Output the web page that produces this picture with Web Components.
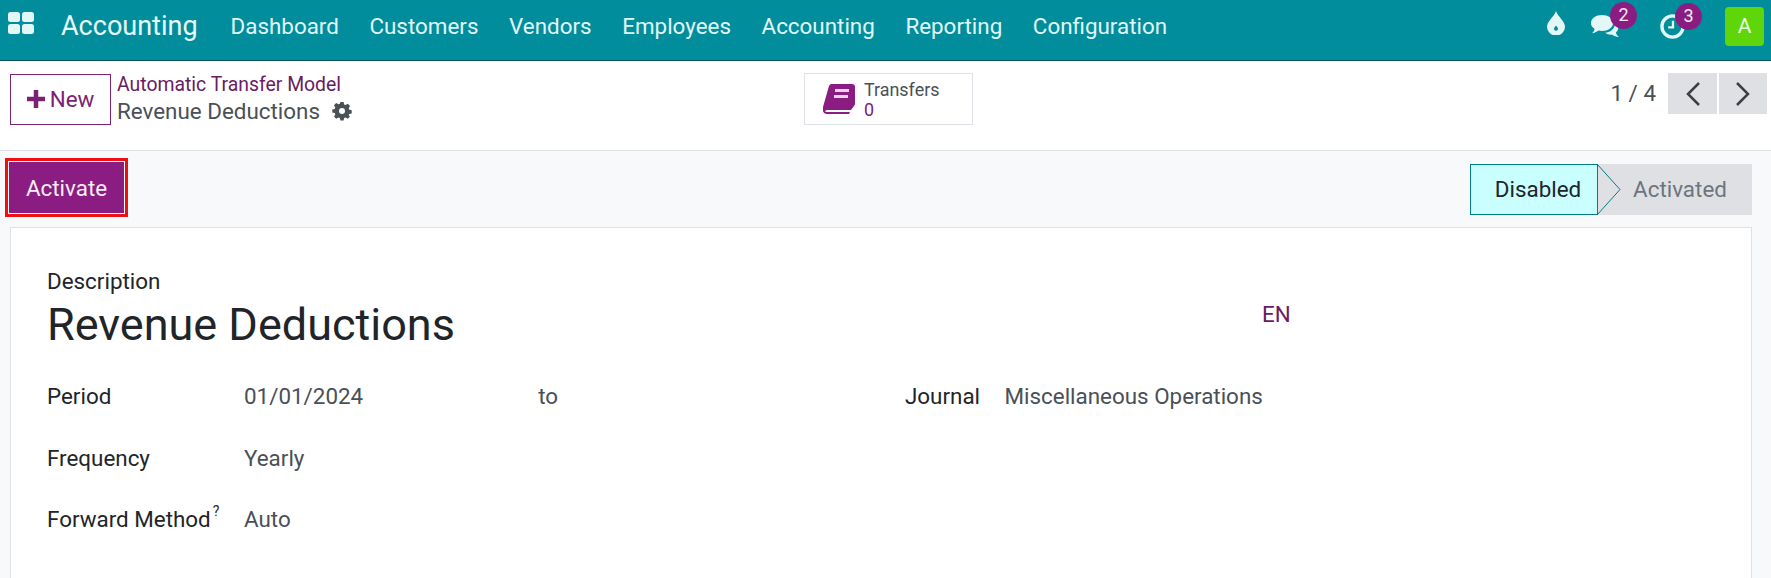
<!DOCTYPE html>
<html>
<head>
<meta charset="utf-8">
<title>Revenue Deductions</title>
<style>
html,body{margin:0;height:100%;overflow:hidden}
body{font-family:Roboto,"Liberation Sans",sans-serif;background:#f8f9fb;color:#212529}
</style>
</head>
<body>
<app-navbar></app-navbar>
<control-panel></control-panel>
<form-sheet></form-sheet>

<script>
//top bar with the apps menu, sections and systray
class AppNavbar extends HTMLElement{
    constructor() {
        super();
        this.attachShadow({mode:'open'});
        let items = ['Dashboard','Customers','Vendors','Employees','Accounting','Reporting','Configuration'];
        this.shadowRoot.innerHTML = `
<style>
:host{display:flex;align-items:center;height:52px;padding-bottom:8px;background:#018d9c;border-bottom:1px solid #00535c;color:#e0f8f8;font-size:22.400px;box-sizing:content-box}
.apps{width:26px;height:22px;margin:0 0 0 8px;position:relative;top:-3px;flex:none}
.brand{font-size:27px;margin-left:27px;color:#e6fbfb}
nav{display:flex;gap:30.600px;margin-left:33px}
.sys{margin-left:auto;display:flex;align-items:center;height:100%}
.ic{position:relative;display:flex}
b{position:absolute;width:27px;height:27px;border-radius:50%;background:#8b1d82;color:#eee;font:400 18px/26px Roboto,sans-serif;text-align:center}
.av{width:39px;height:39px;background:#5fd60a;border-radius:4px;color:#e9fbe0;font-size:21px;line-height:39px;text-align:center;margin:0 7px 0 0}
</style>
<svg class="apps" viewBox="0 0 26 22" fill="#e2f7f6"><rect x="0" y="0" width="12" height="10" rx="2.500"/><rect x="14" y="0" width="12" height="10" rx="2.500"/><rect x="0" y="12" width="12" height="10" rx="2.500"/><rect x="14" y="12" width="12" height="10" rx="2.500"/></svg>
<span class="brand">Accounting</span>
<nav>${items.map(i=>`<span>${i}</span>`).join('')}</nav>
<div class="sys">
  <span class="ic" style="margin-right:25px;top:-3px"><svg width="18" height="24" viewBox="0 0 18 24"><path d="M9 0C11 6 18 10 18 16A9 8.500 0 0 1 0 16C0 10 7 6 9 0Z" fill="#e2f7f6"/><path d="M9 14.500c1 1.500 2 2.300 2 3.300a2 2 0 0 1-4 0c0-1 1-1.800 2-3.300z" fill="#018d9c"/></svg></span>
  <span class="ic" style="margin-right:40px"><svg width="30" height="24" viewBox="0 0 30 24" fill="#e2f7f6"><path d="M12 1C18 1 23 4.500 23 9S18 17 12 17C10.500 17 9.500 16.800 8.500 16.500 6.500 18 4.500 19 2 19.300 3.500 18 4.400 16.500 4.500 14.800 2 13.400 1 11.300 1 9 1 4.500 6 1 12 1Z"/><path d="M25 9.500C27.500 11 29 13 28 15.500 27.500 16.800 26.800 17.700 26 18.300 26 20 27 21.500 29 23 26 22.800 24 22 22.500 20.700 20 21 17 20.300 15 18.800 20 18.500 25 15 25 9.500Z"/></svg><b style="left:20px;top:-12px">2</b></span>
  <span class="ic" style="margin-right:40px"><svg width="25" height="25" viewBox="0 0 26 26" fill="none" stroke="#e2f7f6"><circle cx="13" cy="13" r="11" stroke-width="3.500"/><path d="M13.500 7V14H8.500" stroke-width="2.400"/></svg><b style="left:15px;top:-11px">3</b></span>
  <span class="av">A</span>
</div>`;
    }
}
window.customElements.define('app-navbar', AppNavbar);

//white strip under the navbar: new button, breadcrumb, stat button, pager
class ControlPanel extends HTMLElement{
    constructor() {
        super();
        this.attachShadow({mode:'open'});
        this.shadowRoot.innerHTML = `
<style>
:host{display:grid;grid-template-columns:804px 169px 1fr;height:89px;background:#fff;border-bottom:1px solid #dee2e6;font-size:22.400px}
.left{display:flex;align-items:flex-start;padding:13px 0 0 10px}
.new{box-sizing:border-box;width:101px;height:51px;padding-bottom:2px;border:1px solid #7c2274;color:#7c2274;display:flex;align-items:center;justify-content:center;gap:5px}
.crumbs{margin-left:6px;line-height:27px;margin-top:-3px}
.crumbs a{display:block;color:#6a1b65;font-size:19.400px}
.crumbs span{display:flex;align-items:center;gap:12px;color:#495057;font-size:22.400px}
.crumbs svg{position:relative;top:-1px}
.stat{box-sizing:border-box;margin-top:12px;height:52px;border:1px solid #dee2e6;display:flex;align-items:center;padding-left:18px;gap:9px;color:#495057}
.stat div{font-size:17.920px;line-height:20px;margin-top:1px}
.stat i{display:block;font-style:normal;color:#7c2274}
.right{display:flex;justify-content:flex-end;align-items:flex-start;padding:12px 4px 0 0}
.pg{color:#495057;font-size:22.400px;line-height:41px;margin-right:12px}
.btn{width:49px;height:41px;background:#dee0e4;display:flex;align-items:center;justify-content:center}
.btn+.btn{margin-left:2px;width:48px}
</style>
<div class="left">
  <div class="new"><svg width="18" height="18" viewBox="0 0 16 16" fill="#7c2274"><path d="M6 0h4v6h6v4h-6v6H6v-6H0V6h6z"/></svg>New</div>
  <div class="crumbs"><a>Automatic Transfer Model</a><span>Revenue Deductions <svg width="20" height="20" viewBox="-1 -1 20 20"><path d="M7.400 0h3.200l.5 2.400 1.500.7L14.800 1.800 17 4l-1.300 2.200.6 1.500 2.400.5v3.200l-2.400.5-.6 1.500L17 14.600 14.800 16.800 12.600 15.500l-1.500.6-.5 2.400H7.400l-.5-2.400-1.500-.6L3.200 16.800 1 14.600l1.300-2.200-.6-1.500L-.7 10.400V7.400l2.400-.5.6-1.500L1 3.200 3.200 1l2.200 1.300 1.500-.6z" fill="#495057"/><circle cx="9" cy="9" r="3" fill="#fff"/></svg></span></div>
</div>
<div class="stat">
  <svg width="32" height="30" viewBox="0 0 32 30"><path d="M9 0H29a3 3 0 0 1 3 3V20a3 3 0 0 1-1 2L28 26H24H5C2 26 1 28 4 28H27L26 30H4C0 30-1 26 0 23L6 2A3 3 0 0 1 9 0Z" fill="#8b1d82"/><rect x="12" y="5" width="14" height="3" fill="#e8d5e6"/><rect x="11" y="11" width="14" height="3" fill="#e8d5e6"/></svg>
  <div>Transfers<i>0</i></div>
</div>
<div class="right">
  <span class="pg">1 / 4</span>
  <span class="btn"><svg width="16" height="24" viewBox="0 0 16 24" fill="none" stroke="#3b3f45" stroke-width="2.500"><path d="M14 1L3 12 14 23"/></svg></span>
  <span class="btn"><svg width="16" height="24" viewBox="0 0 16 24" fill="none" stroke="#3b3f45" stroke-width="2.500"><path d="M2 1L13 12 2 23"/></svg></span>
</div>`;
    }
}
window.customElements.define('control-panel', ControlPanel);

//one label + value row of the form
class FieldRow extends HTMLElement{
    constructor() {
        super();
        this.attachShadow({mode:'open'});
        this.shadowRoot.innerHTML = `
<style>
:host{display:flex;font-size:22.400px;line-height:28px;color:#495057}
label{width:197px;color:#212529;flex:none}
sup{font-size:14px;line-height:0;position:relative;top:-3px;margin-left:2px}
</style>
<label>${this.getAttribute('label')}${this.hasAttribute('hint')?'<sup>?</sup>':''}</label><slot></slot>`;
    }
}
window.customElements.define('field-row', FieldRow);

//button row and the sheet with the fields
class FormSheet extends HTMLElement{
    constructor() {
        super();
        this.attachShadow({mode:'open'});
        this.shadowRoot.innerHTML = `
<style>
:host{display:block;font-size:22.400px}
.bar{display:flex;justify-content:space-between;align-items:flex-start;height:76px;box-sizing:border-box}
.act{box-sizing:border-box;margin:7px 0 0 5px;width:123px;height:59px;border:3px solid #ee1010;padding:1px;background:#f8f9fb}
.act span{display:block;height:100%;background:#8b1d82;color:#f6ecf5;text-align:center;line-height:53px}
.st{display:flex;margin:13px 19px 0 0;height:51px}
.on{box-sizing:border-box;width:128px;background:#caffff;border:1px solid #017e84;text-align:center;line-height:49px;color:#212529;position:relative;padding-left:8px}
.on svg{position:absolute;left:100%;top:-1px;z-index:1}
.off{width:154px;background:#dee0e4;color:#6c757d;text-align:center;line-height:51px;box-sizing:border-box;padding-left:10px}
.sheet{margin:0 19px 0 10px;height:360px;background:#fff;border:1px solid #dee2e6;box-sizing:border-box;padding:39px 36px 0}
.d{font-size:22.400px;line-height:28px}
.top{display:flex;align-items:center;color:#212529;margin-top:2px}
h1{font-size:45px;font-weight:400;margin:0;line-height:56px;width:1215px;flex:none}
.en{color:#6a1b65;font-size:22.400px;position:relative;top:-11px}
.cols{display:grid;grid-template-columns:858px 1fr;margin-top:29px}
.cols .g{display:flex;flex-direction:column;gap:34px}
.cols .g field-row+field-row+field-row{margin-top:-1px}
.to{margin-left:175px}
.j{display:flex;color:#495057;line-height:28px}
.j label{color:#212529;width:99.500px}
</style>
<div class="bar">
  <div class="act"><span>Activate</span></div>
  <div class="st"><div class="on">Disabled<svg width="24" height="51" viewBox="0 0 24 51" fill="none" stroke="#017e84"><path d="M0 0L23 25.500 0 51"/></svg></div><div class="off">Activated</div></div>
</div>
<div class="sheet">
  <div class="d">Description</div>
  <div class="top"><h1>Revenue Deductions</h1><span class="en">EN</span></div>
  <div class="cols">
    <div class="g">
      <field-row label="Period">01/01/2024<span class="to">to</span></field-row>
      <field-row label="Frequency">Yearly</field-row>
      <field-row label="Forward Method" hint>Auto</field-row>
    </div>
    <div class="j"><label>Journal</label>Miscellaneous Operations</div>
  </div>
</div>`;
    }
}
window.customElements.define('form-sheet', FormSheet);
</script>
</body>
</html>
